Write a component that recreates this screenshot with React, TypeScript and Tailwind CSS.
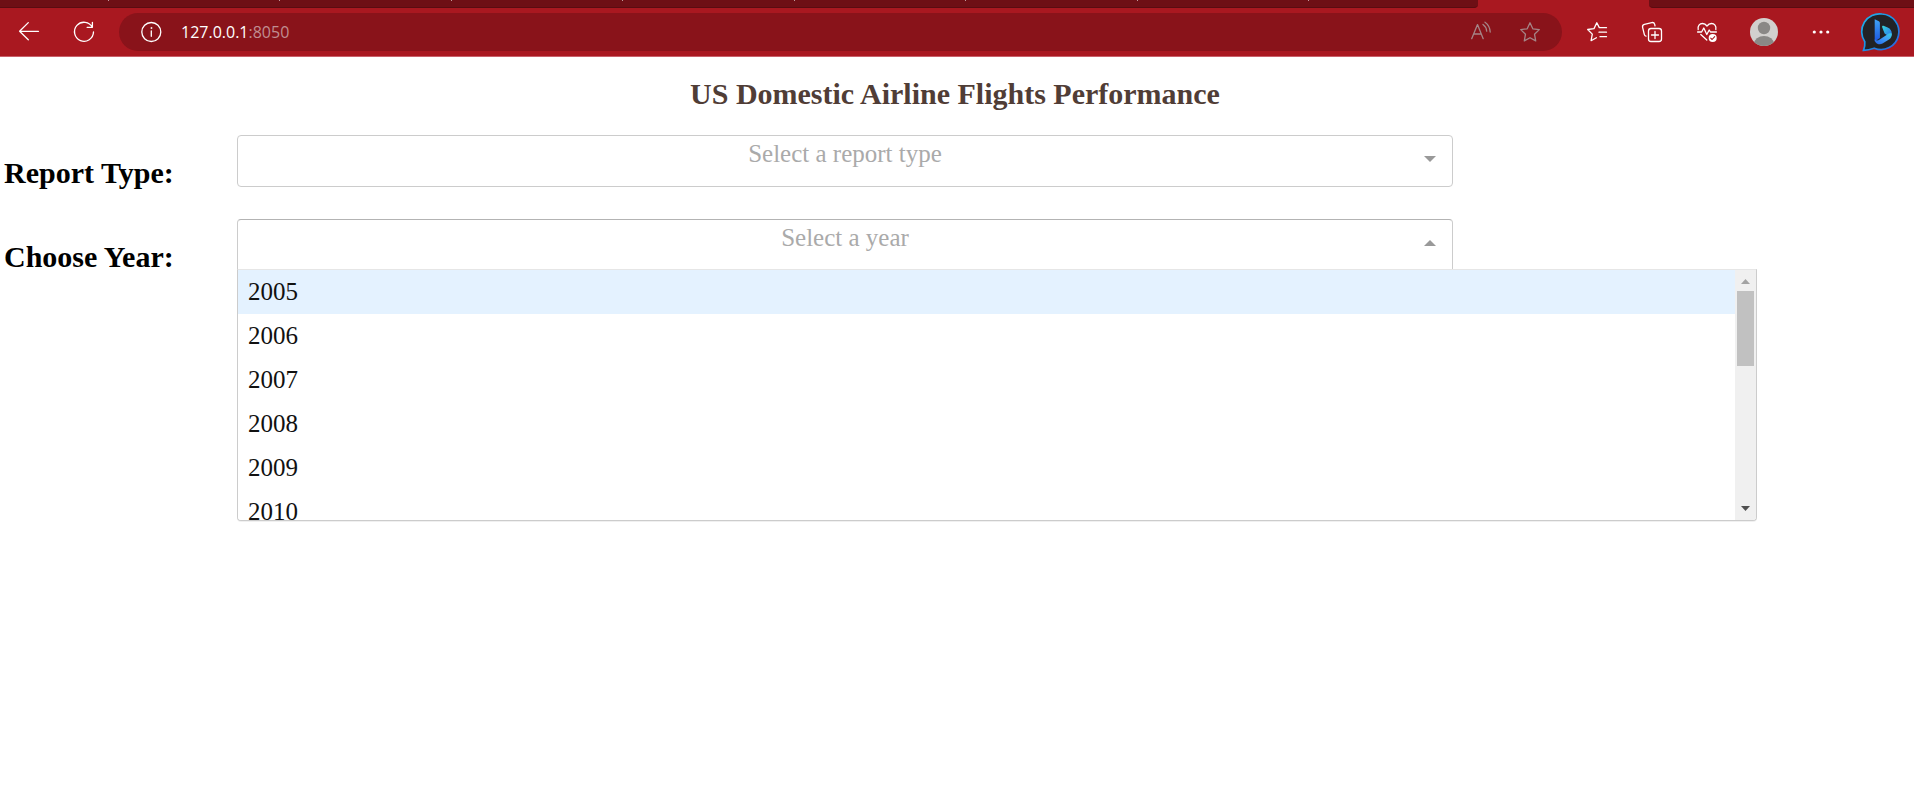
import { useState } from 'react';
import type { ReactNode } from 'react';

const years = Array.from({ length: 16 }, (_, i) => String(2005 + i));
const reports = ['Yearly Airline Performance Report', 'Yearly Airline Delay Report'];
const hiddenTabs = [1, 2, 3, 4, 5, 6, 7];

function IconButton({ label, children }: { label: string; children: ReactNode }) {
  return (
    <button type="button" aria-label={label} className="block shrink-0">
      {children}
    </button>
  );
}

function Line({ children, className = 'text-white' }: { children: ReactNode; className?: string }) {
  return (
    <svg
      viewBox="0 0 20 20"
      fill="none"
      stroke="currentColor"
      strokeWidth="1.3"
      strokeLinecap="round"
      strokeLinejoin="round"
      className={`block size-5 overflow-visible ${className}`}
    >
      {children}
    </svg>
  );
}

function BingLogo() {
  return (
    <svg viewBox="0 0 38 38" className="block size-[38px] overflow-visible">
      <defs>
        <linearGradient id="ring" x1="0" y1="0" x2="1" y2="1">
          <stop offset="0" stopColor="#20b4e8" />
          <stop offset="0.5" stopColor="#1c8fe6" />
          <stop offset="1" stopColor="#2b5fe0" />
        </linearGradient>
        <linearGradient id="stem" x1="0" y1="0" x2="0" y2="1">
          <stop offset="0" stopColor="#3fa4f5" />
          <stop offset="1" stopColor="#1d56e0" />
        </linearGradient>
        <linearGradient id="bowl" x1="0" y1="1" x2="1" y2="0">
          <stop offset="0" stopColor="#2463ea" />
          <stop offset="0.55" stopColor="#3f9cf8" />
          <stop offset="1" stopColor="#38d0e0" />
        </linearGradient>
        <linearGradient id="flag" x1="0" y1="0" x2="1" y2="1">
          <stop offset="0" stopColor="#35d8dc" />
          <stop offset="1" stopColor="#2a6df0" />
        </linearGradient>
      </defs>
      <path
        d="M20 1a17.800 17.800 0 1 1-7.800 34.200C9 36.400 5.500 37.300 1.500 37.300c1.200-2.800 1.600-5.400 1.300-8.600A17.800 17.800 0 0 1 20 1z"
        fill="#212327"
        stroke="url(#ring)"
        strokeWidth="1.7"
      />
      <path d="M12.700 6.300l4.200 2c.7.400 1 .9 1 1.700v15l-5.200 3.500z" fill="url(#stem)" />
      <path
        d="M20.200 14.200c-.4-1 .3-1.800 1.300-1.400l4.200 1.800c2.800 1.200 4.300 3.600 4.100 6.700l-1.200 2.700-4.600-2.600c-.9-.5-1.400-1-1.800-2z"
        fill="url(#flag)"
      />
      <path
        d="M29.800 20.800c.2 2.500-.8 4.500-2.800 5.800l-6.500 4c-3.200 1.800-7.800.3-7.800-4 1.400 1.200 3.400 1 5-.1l7.200-4.800c2-1.300 4.200-1.800 4.900-.9z"
        fill="url(#bowl)"
      />
    </svg>
  );
}

function Browser() {
  return (
    <header className="bg-[#a91820]">
      <div className="flex h-2">
        <div className="flex flex-1 overflow-hidden rounded-br border-b border-[#5a0c11] bg-[#6e0f15]">
          <span className="h-px w-[109px] shrink-0 border-r border-[#c09a9c]" />
          <div className="grid w-[1200px] shrink-0 grid-cols-7">
            {hiddenTabs.map((tab) => (
              <span key={tab} className="h-px border-r border-[#c09a9c]" />
            ))}
          </div>
        </div>
        <div className="w-[171px]" />
        <div className="w-[265px] rounded-bl border-b border-[#5a0c11] bg-[#6e0f15]" />
      </div>
      <div className="flex h-[49px] items-center border-b border-[#c9606a] pr-3.5 pl-[19px]">
        <div className="flex items-center gap-[35px]">
          <IconButton label="Back">
            <Line>
              <path d="M19.500 9.300H.6M9.300.6L.6 9.300l8.700 8.500" />
            </Line>
          </IconButton>
          <IconButton label="Refresh">
            <Line>
              <path d="M18.400 5.300A9.500 9.500 0 1 0 19.500 10M18.400.3v5h-5.300" />
            </Line>
          </IconButton>
        </div>
        <div className="mx-[25px] flex h-[38px] flex-1 items-center rounded-full bg-[#89131a] pr-[22px] pl-[22px]">
          <IconButton label="View site information">
            <Line>
              <circle cx="10.300" cy="10" r="9.500" />
              <path d="M10.300 9v5.300" />
              <circle cx="10.300" cy="6" r=".5" fill="currentColor" strokeWidth=".8" />
            </Line>
          </IconButton>
          <p className="ml-5 flex-1 font-['Open_Sans',sans-serif] text-base text-white">
            127.0.0.1<span className="text-[#c08e91]">:8050</span>
          </p>
          <div className="flex gap-[29px]">
            <IconButton label="Read aloud">
              <Line className="text-[#a58486]">
                <path d="M.7 16.700L6.500 2.600l5.700 14.100M2.700 12h7.500M12 2.500c2.100 1.500 3.500 3.900 3.700 6.700M14 .2c3.100 2.200 5 5.800 5.200 9.800" />
              </Line>
            </IconButton>
            <IconButton label="Add this page to favorites">
              <Line className="text-[#a58486]">
                <path d="M10 .8l2.800 6 6.500.8-4.800 4.600 1.200 6.700L10 15.700l-5.700 3.200 1.200-6.700L.7 7.600l6.500-.8z" />
              </Line>
            </IconButton>
          </div>
        </div>
        <div className="flex items-center gap-[35px]">
          <IconButton label="Favorites">
            <Line>
              <path d="M19.500 5.700h-6.200l-1-.1L9.800.8l-2.800 5.800-6.300.9 4.600 4.600-1.200 6.600 5.300-2.900M12 10.200h7.500M13 14.700h6.500" />
            </Line>
          </IconButton>
          <IconButton label="Collections">
            <Line>
              <rect x="6.500" y="6.500" width="13" height="13" rx="2.500" />
              <path d="M13 9.500v7M9.500 13h7M4 14.200c-1-.2-1.500-.9-1.700-1.800L.6 5.300c-.3-1.400.4-2.500 1.800-2.900L9.800.6c1.400-.3 2.500.4 2.900 1.800l.3 1.400" />
            </Line>
          </IconButton>
          <IconButton label="Browser essentials">
            <Line>
              <path d="M1.200 7.500C.5 4 2.600 1.500 5.500 1.500c2 0 3.400 1 4.500 2.500 1.100-1.500 2.500-2.500 4.500-2.500 2.900 0 5 2.500 4.300 6M.6 10h4l2.200-4 3 6.500 2.400-4.500 1.300 2h5.900M3.800 12.500l6 5.500" />
              <circle cx="15.700" cy="16" r="4" fill="currentColor" stroke="none" />
              <path d="M13.700 16.200l1.400 1.300 2.600-2.900" stroke="#a91820" strokeWidth="1.100" />
            </Line>
          </IconButton>
        </div>
        <div className="mr-[31px] ml-[33px] flex items-center gap-[33px]">
          <IconButton label="Profile">
            <svg viewBox="0 0 28 28" className="block size-7">
              <defs>
                <clipPath id="face">
                  <circle cx="14" cy="14" r="14" />
                </clipPath>
              </defs>
              <g clipPath="url(#face)">
                <rect width="28" height="28" fill="#d2d0ce" />
                <circle cx="14" cy="10" r="6.200" fill="#8a8886" />
                <ellipse cx="14" cy="26" rx="10" ry="8" fill="#8a8886" />
              </g>
            </svg>
          </IconButton>
          <IconButton label="Settings and more">
            <svg viewBox="0 0 20 20" fill="#fff" className="block size-5">
              <circle cx="3.300" cy="10" r="1.600" />
              <circle cx="10" cy="10" r="1.600" />
              <circle cx="16.700" cy="10" r="1.600" />
            </svg>
          </IconButton>
        </div>
        <IconButton label="Bing chat">
          <BingLogo />
        </IconButton>
      </div>
    </header>
  );
}

function Triangle({ up = false, className }: { up?: boolean; className: string }) {
  return (
    <svg viewBox="0 0 12 6" preserveAspectRatio="none" fill="currentColor" aria-hidden="true" className={className}>
      <path d={up ? 'M0 6L6 0l6 6z' : 'M0 0h12L6 6z'} />
    </svg>
  );
}

const selectBase =
  'h-[52px] w-full appearance-none border bg-white px-10 pb-[18px] text-center text-[25px] leading-9 text-[#aaa] outline-none [text-align-last:center]';

export default function App() {
  const [report, setReport] = useState('');
  const [year, setYear] = useState('');
  const [open, setOpen] = useState(true);
  const [active, setActive] = useState('2005');

  return (
    <div className="min-h-screen bg-white font-['Liberation_Serif',serif]">
      <Browser />
      <main className="pt-[19px] pr-2 pl-1">
        <h1 className="mb-[23px] text-center text-[30px] leading-9 font-bold text-[#503d36]">
          US Domestic Airline Flights Performance
        </h1>
        <div className="flex flex-col gap-7 text-[25px]">
          <div className="flex items-start">
            <label htmlFor="report" className="w-[233px] shrink-0 pt-5 text-[30px] leading-9 font-bold text-black">
              Report Type:
            </label>
            <div className="mr-[149px] flex-1">
              <div className="relative w-4/5">
                <select
                  id="report"
                  value={report}
                  onChange={(e) => setReport(e.target.value)}
                  className={`${selectBase} rounded border-[#ccc]`}
                >
                  <option value="" hidden>
                    Select a report type
                  </option>
                  {reports.map((r) => (
                    <option key={r}>{r}</option>
                  ))}
                </select>
                <Triangle className="pointer-events-none absolute top-[21px] right-[17px] h-1.5 w-3 text-[#999]" />
              </div>
            </div>
          </div>
          <div className="flex items-start">
            <label htmlFor="year" className="w-[233px] shrink-0 pt-5 text-[30px] leading-9 font-bold text-black">
              Choose Year:
            </label>
            <div className="relative mr-[149px] flex-1">
              <div className="relative w-4/5">
                <select
                  id="year"
                  value={year}
                  onChange={(e) => setYear(e.target.value)}
                  onMouseDown={(e) => {
                    e.preventDefault();
                    setOpen(!open);
                  }}
                  className={`${selectBase} rounded-t border-[#ccc] border-t-[#b3b3b3]`}
                >
                  <option value="" hidden>
                    Select a year
                  </option>
                  {years.map((y) => (
                    <option key={y}>{y}</option>
                  ))}
                </select>
                <Triangle
                  up={open}
                  className="pointer-events-none absolute top-[21px] right-[17px] h-1.5 w-3 text-[#999]"
                />
              </div>
              {open && (
                <div className="absolute top-[50px] left-0 flex h-[252px] w-full overflow-hidden rounded-b border border-[#ccc] border-t-[#e6e6e6] bg-white shadow-[0_1px_0_rgba(0,0,0,0.06)]">
                  <ul role="listbox" aria-label="Year" className="flex-1 overflow-y-auto [scrollbar-width:none]">
                    {years.map((y) => (
                      <li
                        key={y}
                        role="option"
                        aria-selected={y === year}
                        onMouseEnter={() => setActive(y)}
                        onClick={() => {
                          setYear(y);
                          setOpen(false);
                        }}
                        className={`h-11 cursor-pointer px-2.5 leading-[44px] text-[#111] ${y === active ? 'bg-[#e4f2ff]' : 'bg-white'}`}
                      >
                        {y}
                      </li>
                    ))}
                  </ul>
                  <div className="flex w-[21px] flex-col items-center bg-[#f0f0f0]" aria-hidden="true">
                    <Triangle up className="mt-[9px] h-[5px] w-[9px] text-[#a3a3a3]" />
                    <div className="mt-[7px] h-[75px] w-[17px] bg-[#c1c1c1]" />
                    <Triangle className="mt-auto mb-[9px] h-[5px] w-[9px] text-[#505050]" />
                  </div>
                </div>
              )}
            </div>
          </div>
        </div>
      </main>
    </div>
  );
}
